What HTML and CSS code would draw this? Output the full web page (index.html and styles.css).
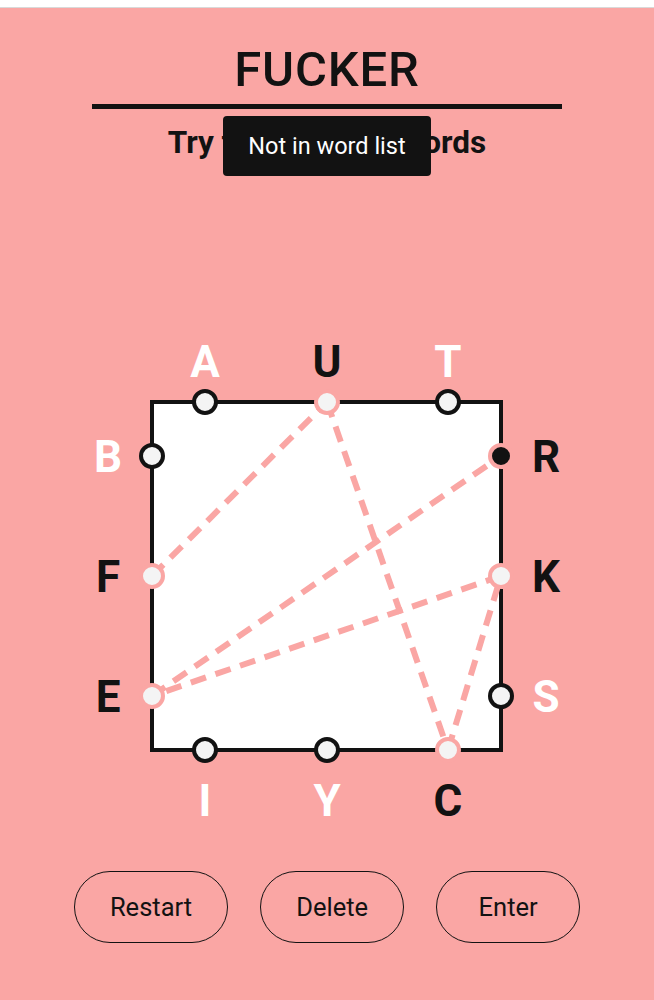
FILE: index.html
```html
<!DOCTYPE html>
<html lang="en">
<head>
<meta charset="utf-8">
<title>Letter Boxed</title>
<link rel="stylesheet" href="styles.css">
</head>
<body>
<div class="topbar"></div>
<main class="game">
  <h1 class="word">FUCKER</h1>
  <div class="rule"></div>
  <div class="hint-wrap">
    <p class="hint">Try to solve in 5 words</p>
    <div class="toast">Not in word list</div>
  </div>
  <svg class="board" width="654" height="500" viewBox="0 330 654 500" xmlns="http://www.w3.org/2000/svg">
    <rect class="box" x="152" y="402" width="349" height="348"/>
    <g class="paths">
      <line x1="152" y1="576" x2="327" y2="402"/>
      <line x1="327" y1="402" x2="448" y2="750"/>
      <line x1="448" y1="750" x2="501" y2="576"/>
      <line x1="501" y1="576" x2="152" y2="696"/>
      <line x1="152" y1="696" x2="501" y2="456"/>
    </g>
    <g class="dots">
      <circle class="dot" cx="205" cy="402" r="11"/>
      <circle class="dot used" cx="327" cy="402" r="11"/>
      <circle class="dot" cx="448" cy="402" r="11"/>
      <circle class="dot" cx="152" cy="456" r="11"/>
      <circle class="dot used" cx="152" cy="576" r="11"/>
      <circle class="dot used" cx="152" cy="696" r="11"/>
      <circle class="dot current" cx="501" cy="456" r="11"/>
      <circle class="dot used" cx="501" cy="576" r="11"/>
      <circle class="dot" cx="501" cy="696" r="11"/>
      <circle class="dot" cx="205" cy="750" r="11"/>
      <circle class="dot" cx="327" cy="750" r="11"/>
      <circle class="dot used" cx="448" cy="750" r="11"/>
    </g>
    <g class="letters">
      <text x="205" y="377">A</text>
      <text class="on" x="327" y="377">U</text>
      <text x="448" y="377">T</text>
      <text x="108" y="472">B</text>
      <text class="on" x="108" y="592">F</text>
      <text class="on" x="108" y="712">E</text>
      <text class="on" x="546" y="472">R</text>
      <text class="on" x="546" y="592">K</text>
      <text x="546" y="712">S</text>
      <text x="205" y="816">I</text>
      <text x="327" y="816">Y</text>
      <text class="on" x="448" y="816">C</text>
    </g>
  </svg>
  <div class="controls">
    <button class="btn">Restart</button>
    <button class="btn">Delete</button>
    <button class="btn">Enter</button>
  </div>
</main>
</body>
</html>
```

FILE: styles.css
```css
html, body {
  margin: 0;
  padding: 0;
}

body {
  background: #faa6a4;
  font-family: Roboto, "Liberation Sans", sans-serif;
  color: #121212;
  width: 654px;
  overflow: hidden;
}

.topbar {
  height: 7px;
  background: #ffffff;
  border-bottom: 1px solid #d9d9d9;
}

.game {
  display: flex;
  flex-direction: column;
  align-items: center;
}

.word {
  margin: 33px 0 0;
  font-size: 49px;
  line-height: 58px;
  font-weight: 500;
  letter-spacing: 0.8px;
  color: #121212;
}

.rule {
  margin-top: 5px;
  width: 470px;
  height: 5px;
  background: #121212;
}

.hint-wrap {
  position: relative;
  margin-top: 16px;
  display: flex;
  justify-content: center;
}

.hint {
  margin: 0;
  font-size: 31.5px;
  line-height: 36px;
  font-weight: 700;
  color: #121212;
}

.toast {
  position: absolute;
  top: -9px;
  left: 50%;
  transform: translateX(-50%);
  width: 208px;
  height: 60px;
  box-sizing: border-box;
  background: #121212;
  color: #ffffff;
  border-radius: 4px;
  font-size: 23.5px;
  line-height: 60px;
  text-align: center;
  white-space: nowrap;
}

.board {
  display: block;
  margin-top: 169px;
}

.box {
  fill: #ffffff;
  stroke: #121212;
  stroke-width: 4;
}

.paths line {
  stroke: #faa6a4;
  stroke-width: 6;
  stroke-dasharray: 16 10;
}

.dot {
  fill: #f4f4f4;
  stroke: #121212;
  stroke-width: 4;
}

.dot.used {
  stroke: #faa6a4;
}

.dot.current {
  fill: #121212;
  stroke: #faa6a4;
}

.letters text {
  font-family: Roboto, "Liberation Sans", sans-serif;
  font-size: 44px;
  font-weight: 700;
  text-anchor: middle;
  fill: #ffffff;
}

.letters text.on {
  fill: #121212;
}

.controls {
  margin-top: 41px;
  display: flex;
  gap: 32px;
  justify-content: center;
}

.btn {
  height: 72px;
  min-width: 144px;
  padding: 0 35px;
  box-sizing: border-box;
  background: transparent;
  border: 1.5px solid #121212;
  border-radius: 36px;
  font-family: Roboto, "Liberation Sans", sans-serif;
  font-size: 25.5px;
  color: #121212;
}
```
